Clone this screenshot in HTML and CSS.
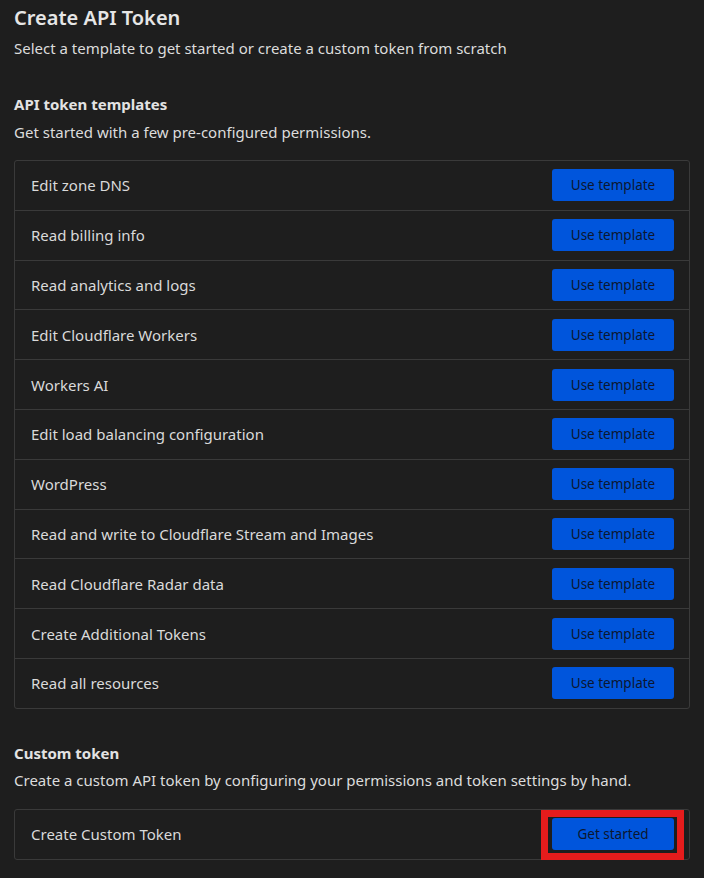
FILE: index.html
```html
<!DOCTYPE html>
<html>
<head>
<meta charset="utf-8">
<link rel="stylesheet" href="styles.css">
</head>
<body>
<main class="page">
  <header class="page-head">
    <h1 class="title">Create API Token</h1>
    <p class="subtitle">Select a template to get started or create a custom token from scratch</p>
  </header>

  <section class="section">
    <h2 class="section-title">API token templates</h2>
    <p class="section-desc">Get started with a few pre-configured permissions.</p>
    <div class="list">
      <div class="row"><span class="row-label">Edit zone DNS</span><button class="btn">Use template</button></div>
      <div class="row"><span class="row-label">Read billing info</span><button class="btn">Use template</button></div>
      <div class="row"><span class="row-label">Read analytics and logs</span><button class="btn">Use template</button></div>
      <div class="row"><span class="row-label">Edit Cloudflare Workers</span><button class="btn">Use template</button></div>
      <div class="row"><span class="row-label">Workers AI</span><button class="btn">Use template</button></div>
      <div class="row"><span class="row-label">Edit load balancing configuration</span><button class="btn">Use template</button></div>
      <div class="row"><span class="row-label">WordPress</span><button class="btn">Use template</button></div>
      <div class="row"><span class="row-label">Read and write to Cloudflare Stream and Images</span><button class="btn">Use template</button></div>
      <div class="row"><span class="row-label">Read Cloudflare Radar data</span><button class="btn">Use template</button></div>
      <div class="row"><span class="row-label">Create Additional Tokens</span><button class="btn">Use template</button></div>
      <div class="row"><span class="row-label">Read all resources</span><button class="btn">Use template</button></div>
    </div>
  </section>

  <section class="section section-custom">
    <h2 class="section-title">Custom token</h2>
    <p class="section-desc">Create a custom API token by configuring your permissions and token settings by hand.</p>
    <div class="list">
      <div class="row row-single"><span class="row-label">Create Custom Token</span><span class="highlight"><button class="btn">Get started</button></span></div>
    </div>
  </section>
</main>
</body>
</html>
```

FILE: styles.css
```css
html, body {
  margin: 0;
  padding: 0;
  background: #1e1e1e;
}
body {
  font-family: "Noto Sans", "Open Sans", sans-serif;
  color: #dcdcdc;
}
.page {
  padding: 4px 14px 0 14px;
  width: 676px;
}
.title {
  margin: 0;
  font-size: 20px;
  font-weight: 600;
  line-height: 28px;
  color: #e6e6e6;
}
.subtitle {
  margin: 4px 0 0 0;
  font-size: 15px;
  line-height: 24px;
}
.section {
  margin-top: 33px;
}
.section-title {
  margin: 0;
  font-size: 15px;
  font-weight: 700;
  line-height: 22px;
  color: #e3e3e3;
}
.section-desc {
  margin: 6px 0 0 0;
  font-size: 15px;
  line-height: 22px;
}
.section-custom .section-desc {
  margin-top: 5px;
}
.list {
  margin-top: 17px;
  border: 1px solid #3a3a3a;
  border-radius: 3px;
}
.section-custom .list {
  margin-top: 18px;
}
.row {
  display: flex;
  align-items: center;
  justify-content: space-between;
  height: 48.8px;
  padding: 0 15px 0 16px;
  border-top: 1px solid #3a3a3a;
}
.row:first-child {
  border-top: none;
}
.row-single {
  height: 49px;
}
.row-label {
  font-size: 15px;
  color: #dadada;
}
.btn {
  width: 122px;
  height: 32px;
  border: none;
  border-radius: 3px;
  background: #0055dc;
  color: #0c1730;
  font-family: "Noto Sans", "Open Sans", sans-serif;
  font-size: 13.5px;
  padding: 0;
  cursor: pointer;
}
.highlight {
  position: relative;
  display: inline-flex;
}
.highlight::after {
  content: "";
  position: absolute;
  top: -8px;
  bottom: -10px;
  left: -11px;
  right: -10px;
  border: 7px solid #e51c1c;
  pointer-events: none;
}
```
